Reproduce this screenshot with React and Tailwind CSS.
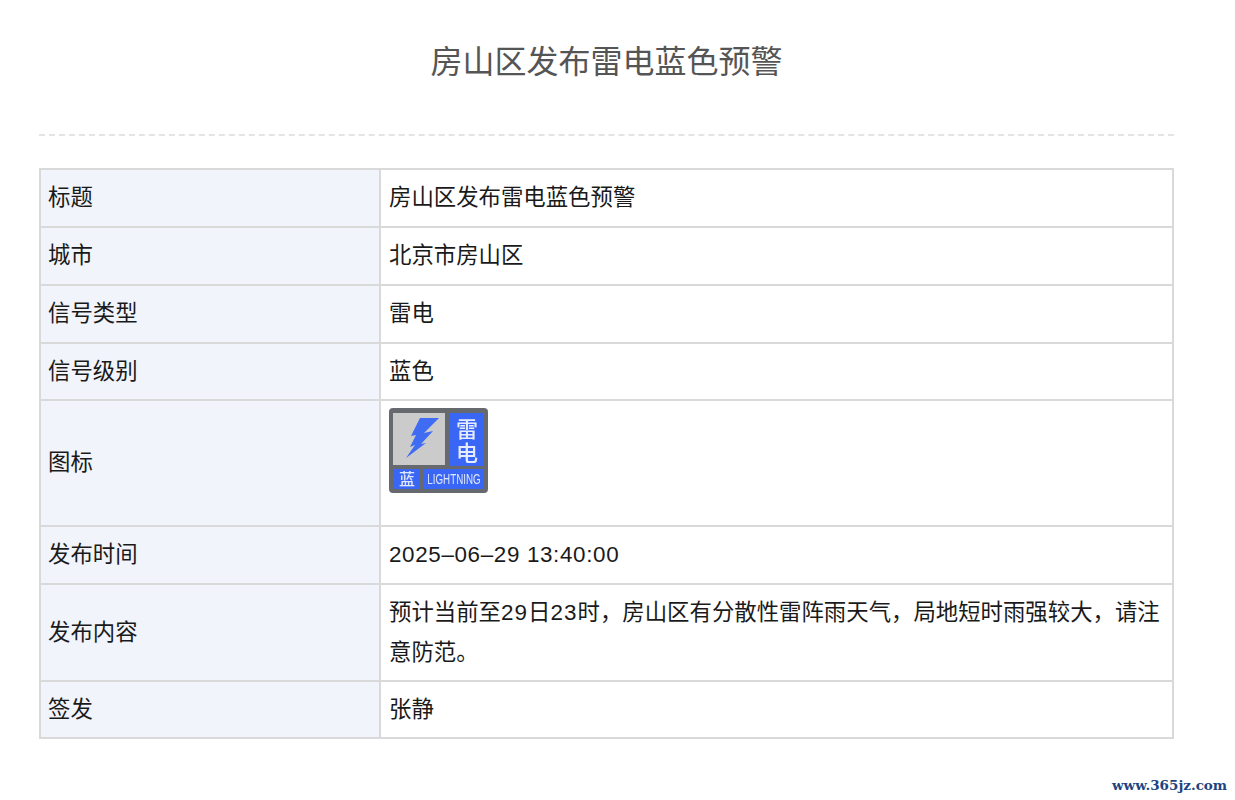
const rows = [
  { label: "标题", value: "房山区发布雷电蓝色预警", h: "h-[58px]" },
  { label: "城市", value: "北京市房山区", h: "h-[58px]" },
  { label: "信号类型", value: "雷电", h: "h-[58px]" },
  { label: "信号级别", value: "蓝色", h: "h-[57px]" },
  { label: "图标", icon: true, h: "h-[126px]" },
  { label: "发布时间", value: <span className="tracking-[0.65px]">2025–06–29 13:40:00</span>, h: "h-[58px]" },
  {
    label: "发布内容",
    value: (
      <>
        预计当前至<span className="tracking-[1.1px]">29</span>日<span className="tracking-[1.1px]">23</span>
        时，房山区有分散性雷阵雨天气，局地短时雨强较大，请注意防范。
      </>
    ),
    h: "h-[97px]",
  },
  { label: "签发", value: "张静", h: "h-[57px]" },
];

function LightningIcon() {
  return (
    <svg width="99" height="85" viewBox="0 0 99 85" className="block blur-[0.4px]">
      <rect width="99" height="85" rx="4" fill="#666a6e" />
      <rect x="4" y="5" width="52" height="52" fill="#cbcbcb" />
      <path d="M31 10 L50 10 L35 25 L44 23 L32 36 L37 35 L17 50 L26 37 L21 39 L27 27 L22 28 Z" fill="#3f6cf2" />
      <rect x="60" y="5" width="35" height="53" fill="#3a66f5" />
      <text x="78" y="29" textAnchor="middle" fill="#e6ecff" fontSize="22" fontWeight="500" fontFamily="'Noto Sans CJK SC', sans-serif">雷</text>
      <text x="78" y="53" textAnchor="middle" fill="#e6ecff" fontSize="22" fontWeight="500" fontFamily="'Noto Sans CJK SC', sans-serif">电</text>
      <rect x="4" y="61" width="27" height="20" fill="#3a66f5" />
      <text x="18" y="77" textAnchor="middle" fill="#dfe7ff" fontSize="16" fontWeight="500" fontFamily="'Noto Sans CJK SC', sans-serif">蓝</text>
      <rect x="34" y="61" width="61" height="20" fill="#3a66f5" />
      <text x="65" y="76" textAnchor="middle" fill="#dfe7ff" fontSize="14" fontFamily="'Liberation Sans', sans-serif" transform="translate(65 0) scale(0.7 1) translate(-65 0)">LIGHTNING</text>
    </svg>
  );
}

export default function App() {
  return (
    <div className="relative h-[800px] overflow-hidden bg-white font-['Liberation_Sans','Noto_Sans_CJK_SC',sans-serif] text-[22.4px] text-[#1a1a1a]">
      <div className="mx-[39px] w-[1135px]">
        <div className="h-[136px] border-b-2 border-dashed border-[#e2e4e6] pt-[38px] text-center text-[32px] leading-[48px] text-[#555]">
          房山区发布雷电蓝色预警
        </div>
        <table className="mt-8 w-full table-fixed border-collapse">
          <tbody>
            {rows.map((row) => (
              <tr key={row.label} className={row.h}>
                <td className="w-[340px] border-2 border-[#d9d9d9] bg-[#f1f4fb] pl-[7px] pr-2">{row.label}</td>
                <td className={`border-2 border-[#d9d9d9] pl-2 pr-1 leading-10 ${row.icon ? "align-top pt-[7px]" : ""}`}>
                  {row.icon ? <LightningIcon /> : row.value}
                </td>
              </tr>
            ))}
          </tbody>
        </table>
      </div>
      <div className="absolute left-[1112px] top-[775px] font-['DejaVu_Serif',serif] text-[13.5px] font-bold leading-5 text-[#1d4480]">
        www.365jz.com
      </div>
    </div>
  );
}
